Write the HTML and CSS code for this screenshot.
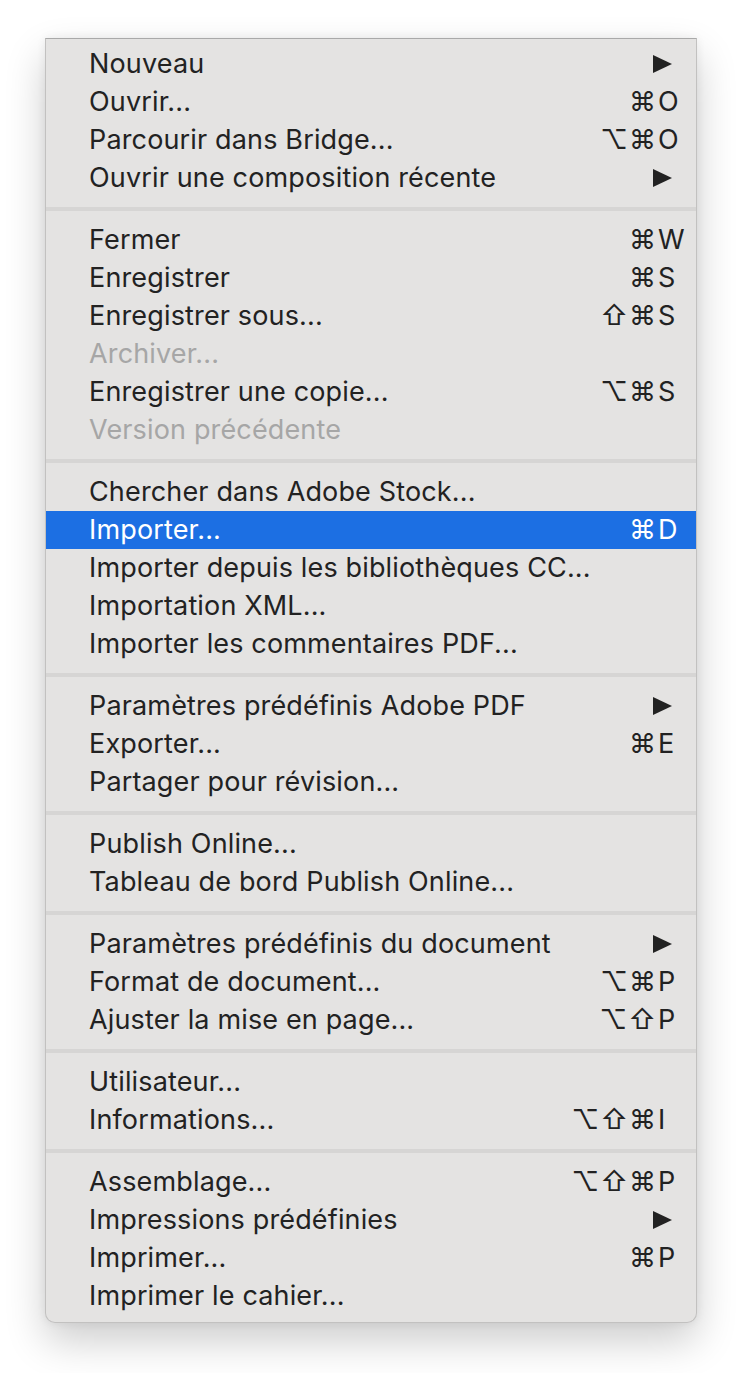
FILE: index.html
```html
<!DOCTYPE html>
<html lang="fr">
<head>
<meta charset="utf-8">
<title>Menu Fichier</title>
<link rel="stylesheet" href="styles.css">
</head>
<body>
<div class="menu">
  <div class="group">
    <div class="item"><span class="label">Nouveau</span><svg class="arrow" viewBox="0 0 19 18"><polygon points="0,0 19,9 0,18"/></svg></div>
    <div class="item"><span class="label">Ouvrir...</span><span class="mods">⌘</span><span class="key">O</span></div>
    <div class="item"><span class="label">Parcourir dans Bridge...</span><span class="mods">⌥⌘</span><span class="key">O</span></div>
    <div class="item"><span class="label">Ouvrir une composition récente</span><svg class="arrow" viewBox="0 0 19 18"><polygon points="0,0 19,9 0,18"/></svg></div>
  </div>
  <div class="sep"></div>
  <div class="group">
    <div class="item"><span class="label">Fermer</span><span class="mods">⌘</span><span class="key">W</span></div>
    <div class="item"><span class="label">Enregistrer</span><span class="mods">⌘</span><span class="key">S</span></div>
    <div class="item"><span class="label">Enregistrer sous...</span><span class="mods">⇧⌘</span><span class="key">S</span></div>
    <div class="item disabled"><span class="label">Archiver...</span></div>
    <div class="item"><span class="label">Enregistrer une copie...</span><span class="mods">⌥⌘</span><span class="key">S</span></div>
    <div class="item disabled"><span class="label">Version précédente</span></div>
  </div>
  <div class="sep"></div>
  <div class="group">
    <div class="item"><span class="label">Chercher dans Adobe Stock...</span></div>
    <div class="item active"><span class="label">Importer...</span><span class="mods">⌘</span><span class="key">D</span></div>
    <div class="item"><span class="label">Importer depuis les bibliothèques CC...</span></div>
    <div class="item"><span class="label">Importation XML...</span></div>
    <div class="item"><span class="label">Importer les commentaires PDF...</span></div>
  </div>
  <div class="sep"></div>
  <div class="group">
    <div class="item"><span class="label">Paramètres prédéfinis Adobe PDF</span><svg class="arrow" viewBox="0 0 19 18"><polygon points="0,0 19,9 0,18"/></svg></div>
    <div class="item"><span class="label">Exporter...</span><span class="mods">⌘</span><span class="key">E</span></div>
    <div class="item"><span class="label">Partager pour révision...</span></div>
  </div>
  <div class="sep"></div>
  <div class="group">
    <div class="item"><span class="label">Publish Online...</span></div>
    <div class="item"><span class="label">Tableau de bord Publish Online...</span></div>
  </div>
  <div class="sep"></div>
  <div class="group">
    <div class="item"><span class="label">Paramètres prédéfinis du document</span><svg class="arrow" viewBox="0 0 19 18"><polygon points="0,0 19,9 0,18"/></svg></div>
    <div class="item"><span class="label">Format de document...</span><span class="mods">⌥⌘</span><span class="key">P</span></div>
    <div class="item"><span class="label">Ajuster la mise en page...</span><span class="mods">⌥⇧</span><span class="key">P</span></div>
  </div>
  <div class="sep"></div>
  <div class="group">
    <div class="item"><span class="label">Utilisateur...</span></div>
    <div class="item"><span class="label">Informations...</span><span class="mods">⌥⇧⌘</span><span class="key">I</span></div>
  </div>
  <div class="sep"></div>
  <div class="group">
    <div class="item"><span class="label">Assemblage...</span><span class="mods">⌥⇧⌘</span><span class="key">P</span></div>
    <div class="item"><span class="label">Impressions prédéfinies</span><svg class="arrow" viewBox="0 0 19 18"><polygon points="0,0 19,9 0,18"/></svg></div>
    <div class="item"><span class="label">Imprimer...</span><span class="mods">⌘</span><span class="key">P</span></div>
    <div class="item"><span class="label">Imprimer le cahier...</span></div>
  </div>
</div>
</body>
</html>
```
FILE: styles.css
```css
html, body {
  margin: 0;
  padding: 0;
  background: #ffffff;
}

body {
  font-family: Inter, "Noto Sans", "DejaVu Sans", sans-serif;
  color: #222222;
  padding-bottom: 50px;
}

.menu {
  margin: 38px 0 0 45px;
  width: 650px;
  background: #e4e3e2;
  border: 1px solid #c2c1c0;
  border-top-color: #a9a9a9;
  border-radius: 0 0 10px 10px;
  padding: 6px 0 7px;
  box-shadow: 0 18px 40px rgba(0, 0, 0, 0.2), 0 0 10px rgba(0, 0, 0, 0.07);
}

.item {
  display: flex;
  align-items: center;
  height: 38px;
  padding-left: 43px;
  font-size: 27px;
  letter-spacing: 0.15px;
  line-height: 38px;
  white-space: nowrap;
}

.label {
  flex: 1;
}

.mods {
  text-align: right;
  letter-spacing: 1px;
  margin-right: 1px;
}

.key {
  width: 38px;
}

.arrow {
  width: 19px;
  height: 18px;
  margin-right: 24px;
  fill: #222222;
}

.disabled {
  color: #a6a6a6;
}

.active {
  background: #1c6fe3;
  color: #ffffff;
}

.sep {
  height: 4px;
  margin: 10px 0;
  background: #d6d5d4;
}
```
